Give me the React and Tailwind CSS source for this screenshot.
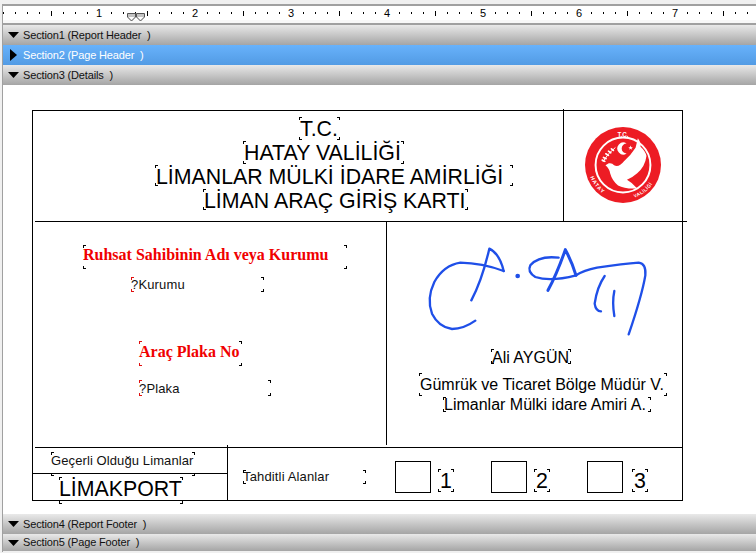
function Field({ className, textClass, redLeft, children }) {
    const left = redLeft ? "border-[#e01010]" : "border-black";
    return (
        <div className={`relative flex shrink-0 items-center whitespace-nowrap ${className}`}>
            <span className={`absolute left-0 top-0 w-[3px] h-[3px] border-l border-t ${left}`} />
            <span className="absolute right-0 top-0 w-[3px] h-[3px] border-r border-t border-black" />
            <span className={`absolute left-0 bottom-0 w-[3px] h-[3px] border-l border-b ${left}`} />
            <span className="absolute right-0 bottom-0 w-[3px] h-[3px] border-r border-b border-black" />
            <span className={textClass}>{children}</span>
        </div>
    );
}

function SectionBar({ title, selected, collapsed, className = "h-5" }) {
    const bg = selected
        ? "bg-gradient-to-b from-[#68b2fb] to-[#529be4] text-white"
        : "bg-gradient-to-b from-[#e9e9e9] to-[#a5a5a5] text-[#111]";
    return (
        <div className={`flex items-center shrink-0 text-[11px] tracking-[-0.15px] leading-none ${bg} ${className}`}>
            {collapsed ? (
                <svg width="7" height="12" viewBox="0 0 7 12" className="ml-[7px] mr-[6px] shrink-0">
                    <path d="M0 0 L7 6 L0 12 Z" fill="#000" />
                </svg>
            ) : (
                <svg width="11" height="6" viewBox="0 0 11 6" className="ml-[5px] mr-1 shrink-0">
                    <path d="M0 0 H11 L5.5 6 Z" fill="#000" />
                </svg>
            )}
            <span className="whitespace-pre">{title}</span>
        </div>
    );
}

function Ruler() {
    const cells = Array.from({ length: 64 }, (_, i) => i);
    return (
        <div className="relative flex h-[14px] shrink-0 bg-white">
            {cells.map((i) => (
                <div key={i} className="flex w-3 shrink-0 items-center justify-center first:ml-[-6px]">
                    {i % 8 === 0 && i > 0 ? (
                        <span className="text-[11px] leading-none text-black">{i / 8}</span>
                    ) : i % 4 === 0 && i > 0 ? (
                        <span className="w-px h-[5px] bg-black" />
                    ) : (
                        <span className="w-px h-[2px] bg-black" />
                    )}
                </div>
            ))}
            <svg width="18" height="9" viewBox="0 0 18 9" className="absolute left-[124px] top-[7px]">
                <path d="M0.5 0.5 H8.5 V4 L4.5 8 L0.5 4 Z" fill="#c4c4c4" stroke="#555" strokeWidth="1" />
                <path d="M9.5 0.5 H17.5 V4 L13.5 8 L9.5 4 Z" fill="#c4c4c4" stroke="#555" strokeWidth="1" />
                <path d="M1.5 4 L4.5 7 L7.5 4 Z M10.5 4 L13.5 7 L16.5 4 Z" fill="#fff" />
            </svg>
        </div>
    );
}

function Logo() {
    return (
        <svg width="76" height="76" viewBox="10 12 230 230" className="ml-[21px] mt-4">
            <defs>
                <path id="arcLeft" d="M26 163 A105 105 0 0 0 88 226" />
                <path id="arcRight" d="M160 226 A105 105 0 0 0 227 155" />
            </defs>
            <circle cx="125" cy="127" r="115" fill="#ed1c24" />
            <circle cx="125" cy="127" r="83" fill="none" stroke="#fff" strokeWidth="6" />
            <text x="125" y="41" textAnchor="middle" fill="#fff" fontSize="19" fontWeight="700" fontFamily="Liberation Sans, sans-serif">T.C.</text>
            <text fill="#fff" fontSize="16" fontWeight="700" letterSpacing="3" fontFamily="Liberation Sans, sans-serif">
                <textPath href="#arcLeft">HATAY</textPath>
            </text>
            <text fill="#fff" fontSize="14" fontWeight="700" letterSpacing="1.5" fontFamily="Liberation Sans, sans-serif">
                <textPath href="#arcRight">VALİLİĞİ</textPath>
            </text>
            <path d="M136 62 A18 18 0 1 0 136 92 A15 15 0 1 1 136 62 Z" fill="#fff" />
            <path d="M148 68 L150 73 L155 73 L151 76 L153 81 L148 78 L144 81 L145 76 L141 73 L146 73 Z" fill="#fff" />
            <path d="M64 118 Q78 92 102 74" fill="none" stroke="#fff" strokeWidth="3" />
            <path d="M66 104 L74 108 M73 93 L81 98 M81 85 L88 90 M90 78 L96 83 M62 112 L70 116" stroke="#fff" strokeWidth="5" strokeLinecap="round" />
            <path d="M72 128 L82 122 Q92 120 98 128 Q112 136 128 116 Q150 96 163 75 L170 46 Q180 60 178 72 Q193 85 196 100 Q192 132 168 152 Q152 166 137 172 Q152 180 168 198 Q130 200 110 189 Q92 174 86 152 Q84 138 72 128 Z" fill="#fff" />
        </svg>
    );
}

function Signature() {
    return (
        <svg width="220" height="88" viewBox="50 50 660 264" className="ml-10 mt-[25px] shrink-0 overflow-visible" fill="none" stroke="#1f4fe8" strokeWidth="7" strokeLinecap="round" strokeLinejoin="round">
            <path d="M195 271 Q160 296 125 296 Q85 290 65 250 Q48 205 72 155 Q100 105 150 97 Q215 98 280 122" />
            <path d="M183 210 Q215 150 237 55 Q268 70 280 122" />
            <path d="M413 180 Q440 130 465 58 Q485 95 497 135" strokeWidth="9" />
            <path d="M497 135 Q420 155 375 140 Q350 125 360 105 Q385 75 445 82" />
            <path d="M497 135 Q520 120 560 112 Q640 100 685 97 Q708 100 705 135 Q695 195 655 312" />
            <path d="M583 137 Q560 170 553 220 Q556 243 572 243" />
            <path d="M612 182 Q605 215 612 257" />
            <circle cx="322" cy="137" r="7" fill="#1f4fe8" stroke="none" />
        </svg>
    );
}

const title = "text-[21.33px] leading-none text-black";
const redTitle = "[font-family:'Liberation_Serif',serif] font-bold text-[16px] leading-none text-[#f00000]";
const small = "text-[13px] leading-none tracking-[0.15px] text-[#111]";
const mid = "text-[16px] leading-none text-black";

export default function App() {
    return (
        <div className="w-[756px] h-[553px] overflow-hidden bg-[#f0f0f0] pt-1 pl-[2px] [font-family:'Liberation_Sans',Arial,sans-serif]">
            <div className="flex h-[548px] flex-col border-l border-[#a0a0a0]">
                <div className="h-[2px] shrink-0 bg-[#a0a0a0]" />
                <Ruler />
                <div className="h-[3px] shrink-0 bg-[#f8f8f8]" />
                <div className="h-[2px] shrink-0 bg-[#a0a0a0]" />

                <SectionBar title="Section1 (Report Header  )" />
                <SectionBar title="Section2 (Page Header  )" selected collapsed />
                <SectionBar title="Section3 (Details  )" />

                <div className="h-[429px] shrink-0 bg-white pt-[25px] pl-[29px]">
                    <div className="flex h-[391px] w-[651px] flex-col border border-black">
                        <div className="flex h-[110px] shrink-0">
                            <div className="w-[530px] shrink-0 pt-[6px]">
                                <Field className="ml-[266px] w-[41px] h-[23px] pt-[2px]" textClass={`${title} pl-px`}>T.C.</Field>
                                <Field className="ml-[210px] mt-px w-[161px] h-[23px] pt-[2px]" textClass={`${title} pl-px`}>HATAY VALİLİĞİ</Field>
                                <Field className="ml-[122px] mt-px w-[358px] h-[21px] pt-1" textClass={`${title} pl-px`}>LİMANLAR MÜLKİ İDARE AMİRLİĞİ</Field>
                                <Field className="ml-[170px] mt-[3px] w-[265px] h-[21px] pt-1" textClass={`${title} pl-px`}>LİMAN ARAÇ GİRİŞ KARTI</Field>
                            </div>
                            <div className="-mt-[2px] h-[112px] w-px shrink-0 bg-black" />
                            <div className="flex-1">
                                <Logo />
                            </div>
                        </div>
                        <div className="ml-[2px] -mr-[5px] h-px shrink-0 bg-black" />

                        <div className="flex h-[225px] shrink-0">
                            <div className="flex w-[353px] shrink-0 flex-col">
                                <Field className="ml-[50px] mt-[23px] w-[264px] h-6 !items-start pt-[2px]" textClass={redTitle}>Ruhsat Sahibinin Adı veya Kurumu</Field>
                                <Field redLeft className="ml-[98px] mt-2 w-[133px] h-[15px]" textClass={small}>?Kurumu</Field>
                                <Field redLeft className="ml-[106px] mt-[49px] w-[103px] h-[25px] pb-1" textClass={redTitle}>Araç Plaka No</Field>
                                <Field redLeft className="ml-[106px] mt-[14px] w-[132px] h-4" textClass={small}>?Plaka</Field>
                            </div>
                            <div className="h-[223px] w-px shrink-0 bg-black" />
                            <div className="flex flex-1 flex-col">
                                <Signature />
                                <Field className="ml-[104px] mt-[14px] w-20 h-[15px] pt-[3px]" textClass={`${mid} pl-px`}>Ali AYGÜN</Field>
                                <Field className="ml-8 mt-[9px] w-[248px] h-[23px]" textClass={`${mid} pl-px`}>Gümrük ve Ticaret Bölge Müdür V.</Field>
                                <Field className="ml-14 mt-px w-[208px] h-[15px]" textClass={`${mid} pl-px`}>Limanlar Mülki idare Amiri A.</Field>
                            </div>
                        </div>
                        <div className="ml-[2px] h-px shrink-0 bg-black" />

                        <div className="flex h-[52px] shrink-0">
                            <div className="w-[194px] shrink-0">
                                <div className="h-[25px] pt-1">
                                    <Field className="ml-[18px] w-[144px] h-6 !items-start pt-[2px]" textClass="text-[13px] leading-none tracking-[0.1px] text-[#111]">Geçerli Olduğu Limanlar</Field>
                                </div>
                                <div className="h-px bg-black" />
                                <div className="pt-[3px]">
                                    <Field className="ml-[26px] w-[124px] h-[27px] pb-[2px]" textClass={title}>LİMAKPORT</Field>
                                </div>
                            </div>
                            <div className="-mt-[3px] h-[55px] w-px shrink-0 bg-black" />
                            <div className="flex flex-1 items-start">
                                <Field className="ml-[15px] mt-[22px] w-[123px] h-[14px] pb-[2px]" textClass={small}>Tahditli Alanlar</Field>
                                <div className="ml-[29px] mt-[13px] h-8 w-9 shrink-0 border border-black" />
                                <Field className="ml-[7px] mt-[21px] w-4 h-[23px] justify-center pt-[2px]" textClass={title}>1</Field>
                                <div className="ml-[37px] mt-[13px] h-8 w-9 shrink-0 border border-black" />
                                <Field className="ml-[7px] mt-[21px] w-4 h-[23px] justify-center pt-[2px]" textClass={title}>2</Field>
                                <div className="ml-[37px] mt-[13px] h-8 w-9 shrink-0 border border-black" />
                                <Field className="ml-[9px] mt-[21px] w-4 h-[23px] justify-center pt-[2px]" textClass={title}>3</Field>
                            </div>
                        </div>
                    </div>
                </div>

                <SectionBar title="Section4 (Report Footer  )" />
                <SectionBar title="Section5 (Page Footer  )" className="h-[17px]" />
            </div>
        </div>
    );
}
